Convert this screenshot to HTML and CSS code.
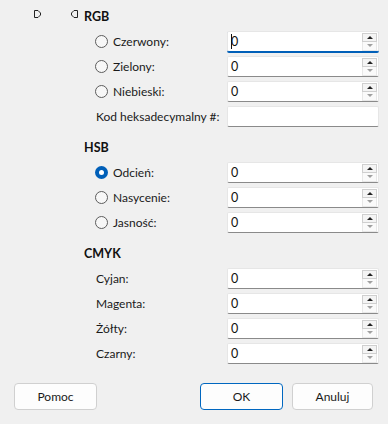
FILE: index.html
```html
<!DOCTYPE html>
<html lang="pl">
<head>
  <meta charset="UTF-8" />
  <title>Kolor</title>
  <link rel="stylesheet" href="styles.css">
</head>

<body>
  <div class="dialog">
    <div class="panel">

      <!-- RGB -->
      <div class="section">
        <div class="section-title with-markers">
          <div class="markers">
            <svg width="9" height="10" viewBox="0 0 9 10"><path d="M1.5 1.5 H5 L7.5 4 V6 L5 8.5 H1.5 Z" fill="none" stroke="#222" stroke-width="1"/></svg>
            <svg width="9" height="10" viewBox="0 0 9 10"><path d="M7.5 1.5 H4 L1.5 4 V6 L4 8.5 H7.5 Z" fill="none" stroke="#222" stroke-width="1"/></svg>
          </div>
          <span>RGB</span>
        </div>
        <div class="row">
          <label class="label"><span class="radio"></span>Czerwony:</label>
          <div class="field focused">
            <span class="value"><span class="caret"></span>0</span>
            <div class="spin"><span class="spin-up"></span><span class="spin-down"></span></div>
          </div>
        </div>
        <div class="row">
          <label class="label"><span class="radio"></span>Zielony:</label>
          <div class="field">
            <span class="value">0</span>
            <div class="spin"><span class="spin-up"></span><span class="spin-down"></span></div>
          </div>
        </div>
        <div class="row">
          <label class="label"><span class="radio"></span>Niebieski:</label>
          <div class="field">
            <span class="value">0</span>
            <div class="spin"><span class="spin-up"></span><span class="spin-down"></span></div>
          </div>
        </div>
        <div class="row">
          <label class="label plain">Kod heksadecymalny #:</label>
          <div class="field">
            <span class="value"></span>
          </div>
        </div>
      </div>

      <!-- HSB -->
      <div class="section">
        <div class="section-title">HSB</div>
        <div class="row">
          <label class="label"><span class="radio checked"></span>Odcień:</label>
          <div class="field">
            <span class="value">0</span>
            <div class="spin"><span class="spin-up"></span><span class="spin-down"></span></div>
          </div>
        </div>
        <div class="row">
          <label class="label"><span class="radio"></span>Nasycenie:</label>
          <div class="field">
            <span class="value">0</span>
            <div class="spin"><span class="spin-up"></span><span class="spin-down"></span></div>
          </div>
        </div>
        <div class="row">
          <label class="label"><span class="radio"></span>Jasność:</label>
          <div class="field">
            <span class="value">0</span>
            <div class="spin"><span class="spin-up"></span><span class="spin-down"></span></div>
          </div>
        </div>
      </div>

      <!-- CMYK -->
      <div class="section">
        <div class="section-title">CMYK</div>
        <div class="row">
          <label class="label plain">Cyjan:</label>
          <div class="field">
            <span class="value">0</span>
            <div class="spin"><span class="spin-up"></span><span class="spin-down"></span></div>
          </div>
        </div>
        <div class="row">
          <label class="label plain">Magenta:</label>
          <div class="field">
            <span class="value">0</span>
            <div class="spin"><span class="spin-up"></span><span class="spin-down"></span></div>
          </div>
        </div>
        <div class="row">
          <label class="label plain">Żółty:</label>
          <div class="field">
            <span class="value">0</span>
            <div class="spin"><span class="spin-up"></span><span class="spin-down"></span></div>
          </div>
        </div>
        <div class="row">
          <label class="label plain">Czarny:</label>
          <div class="field">
            <span class="value">0</span>
            <div class="spin"><span class="spin-up"></span><span class="spin-down"></span></div>
          </div>
        </div>
      </div>
    </div>

    <div class="button-bar">
      <button class="btn">Pomoc</button>
      <div class="button-group">
        <button class="btn btn-default">OK</button>
        <button class="btn btn-narrow">Anuluj</button>
      </div>
    </div>
  </div>
</body>
</html>
```

FILE: styles.css
```css
* {
  margin: 0;
  padding: 0;
  box-sizing: border-box;
  font-family: Lato, 'Noto Sans', sans-serif;
}

body {
  background-color: #f0f0f0;
  color: #1a1a1a;
  font-size: 12px;
}

.dialog {
  width: 388px;
  height: 424px;
  display: flex;
  flex-direction: column;
}

.panel {
  padding-top: 9px;
  display: flex;
  flex-direction: column;
  gap: 13px;
}

.section {
  display: flex;
  flex-direction: column;
  gap: 4px;
}

.section-title {
  padding-left: 84px;
  height: 16px;
  line-height: 16px;
  font-size: 12.5px;
  font-weight: bold;
  color: #111;
  margin-bottom: 2px;
  display: flex;
  align-items: center;
}

.section-title.with-markers {
  padding-left: 33px;
}

.markers {
  width: 51px;
  display: flex;
  gap: 28px;
  align-items: center;
  margin-top: -7px;
}

.row {
  display: grid;
  grid-template-columns: 132px 152px;
  padding-left: 95px;
  height: 21px;
  align-items: center;
}

.label {
  display: flex;
  align-items: center;
  gap: 5px;
  color: #1a1a1a;
}

.label.plain {
  padding-left: 1px;
}

.radio {
  width: 13px;
  height: 13px;
  border: 1px solid #5c5c5c;
  border-radius: 50%;
  background-color: #f7f7f7;
}

.radio.checked {
  border: none;
  background-color: #005fb8;
  position: relative;
}

.radio.checked::after {
  content: '';
  position: absolute;
  left: 4px;
  top: 4px;
  width: 5px;
  height: 5px;
  border-radius: 50%;
  background-color: white;
}

.field {
  height: 21px;
  background-color: white;
  border: 1px solid #e6e6e6;
  border-bottom-color: #8a8a8a;
  border-radius: 2px;
  display: flex;
  align-items: center;
  justify-content: space-between;
  padding: 0 1px 0 3px;
}

.field.focused {
  border-bottom: 1px solid #005fb8;
  box-shadow: 0 1px 0 #005fb8;
}

.value {
  display: flex;
  align-items: center;
  font-size: 12.5px;
  color: #111;
}

.caret {
  width: 1px;
  height: 15px;
  background-color: #111;
  margin-right: -1px;
}

.spin {
  width: 15px;
  height: 18px;
  display: flex;
  flex-direction: column;
}

.spin-up,
.spin-down {
  flex: 1;
  display: flex;
  justify-content: center;
  align-items: center;
}

.spin-up {
  border: 1px solid #cfcfcf;
  background-color: #f4f4f4;
}

.spin-down {
  border: 1px solid #e8e8e8;
  border-top: none;
  background-color: #fafafa;
}

.spin-up::before {
  content: '';
  border-left: 3px solid transparent;
  border-right: 3px solid transparent;
  border-bottom: 3px solid #222;
}

.spin-down::before {
  content: '';
  border-left: 3px solid transparent;
  border-right: 3px solid transparent;
  border-top: 3px solid #a0a0a0;
}

.button-bar {
  margin-top: 19px;
  padding: 0 15px 0 14px;
  display: flex;
  justify-content: space-between;
}

.button-group {
  display: flex;
  gap: 9px;
}

.btn {
  width: 83px;
  height: 27px;
  background-color: #fdfdfd;
  border: 1px solid #d0d0d0;
  border-radius: 4px;
  font-size: 12px;
  font-weight: normal;
  color: #1a1a1a;
}

.btn-default {
  border-color: #0067c0;
}

.btn-narrow {
  width: 81px;
}
```
